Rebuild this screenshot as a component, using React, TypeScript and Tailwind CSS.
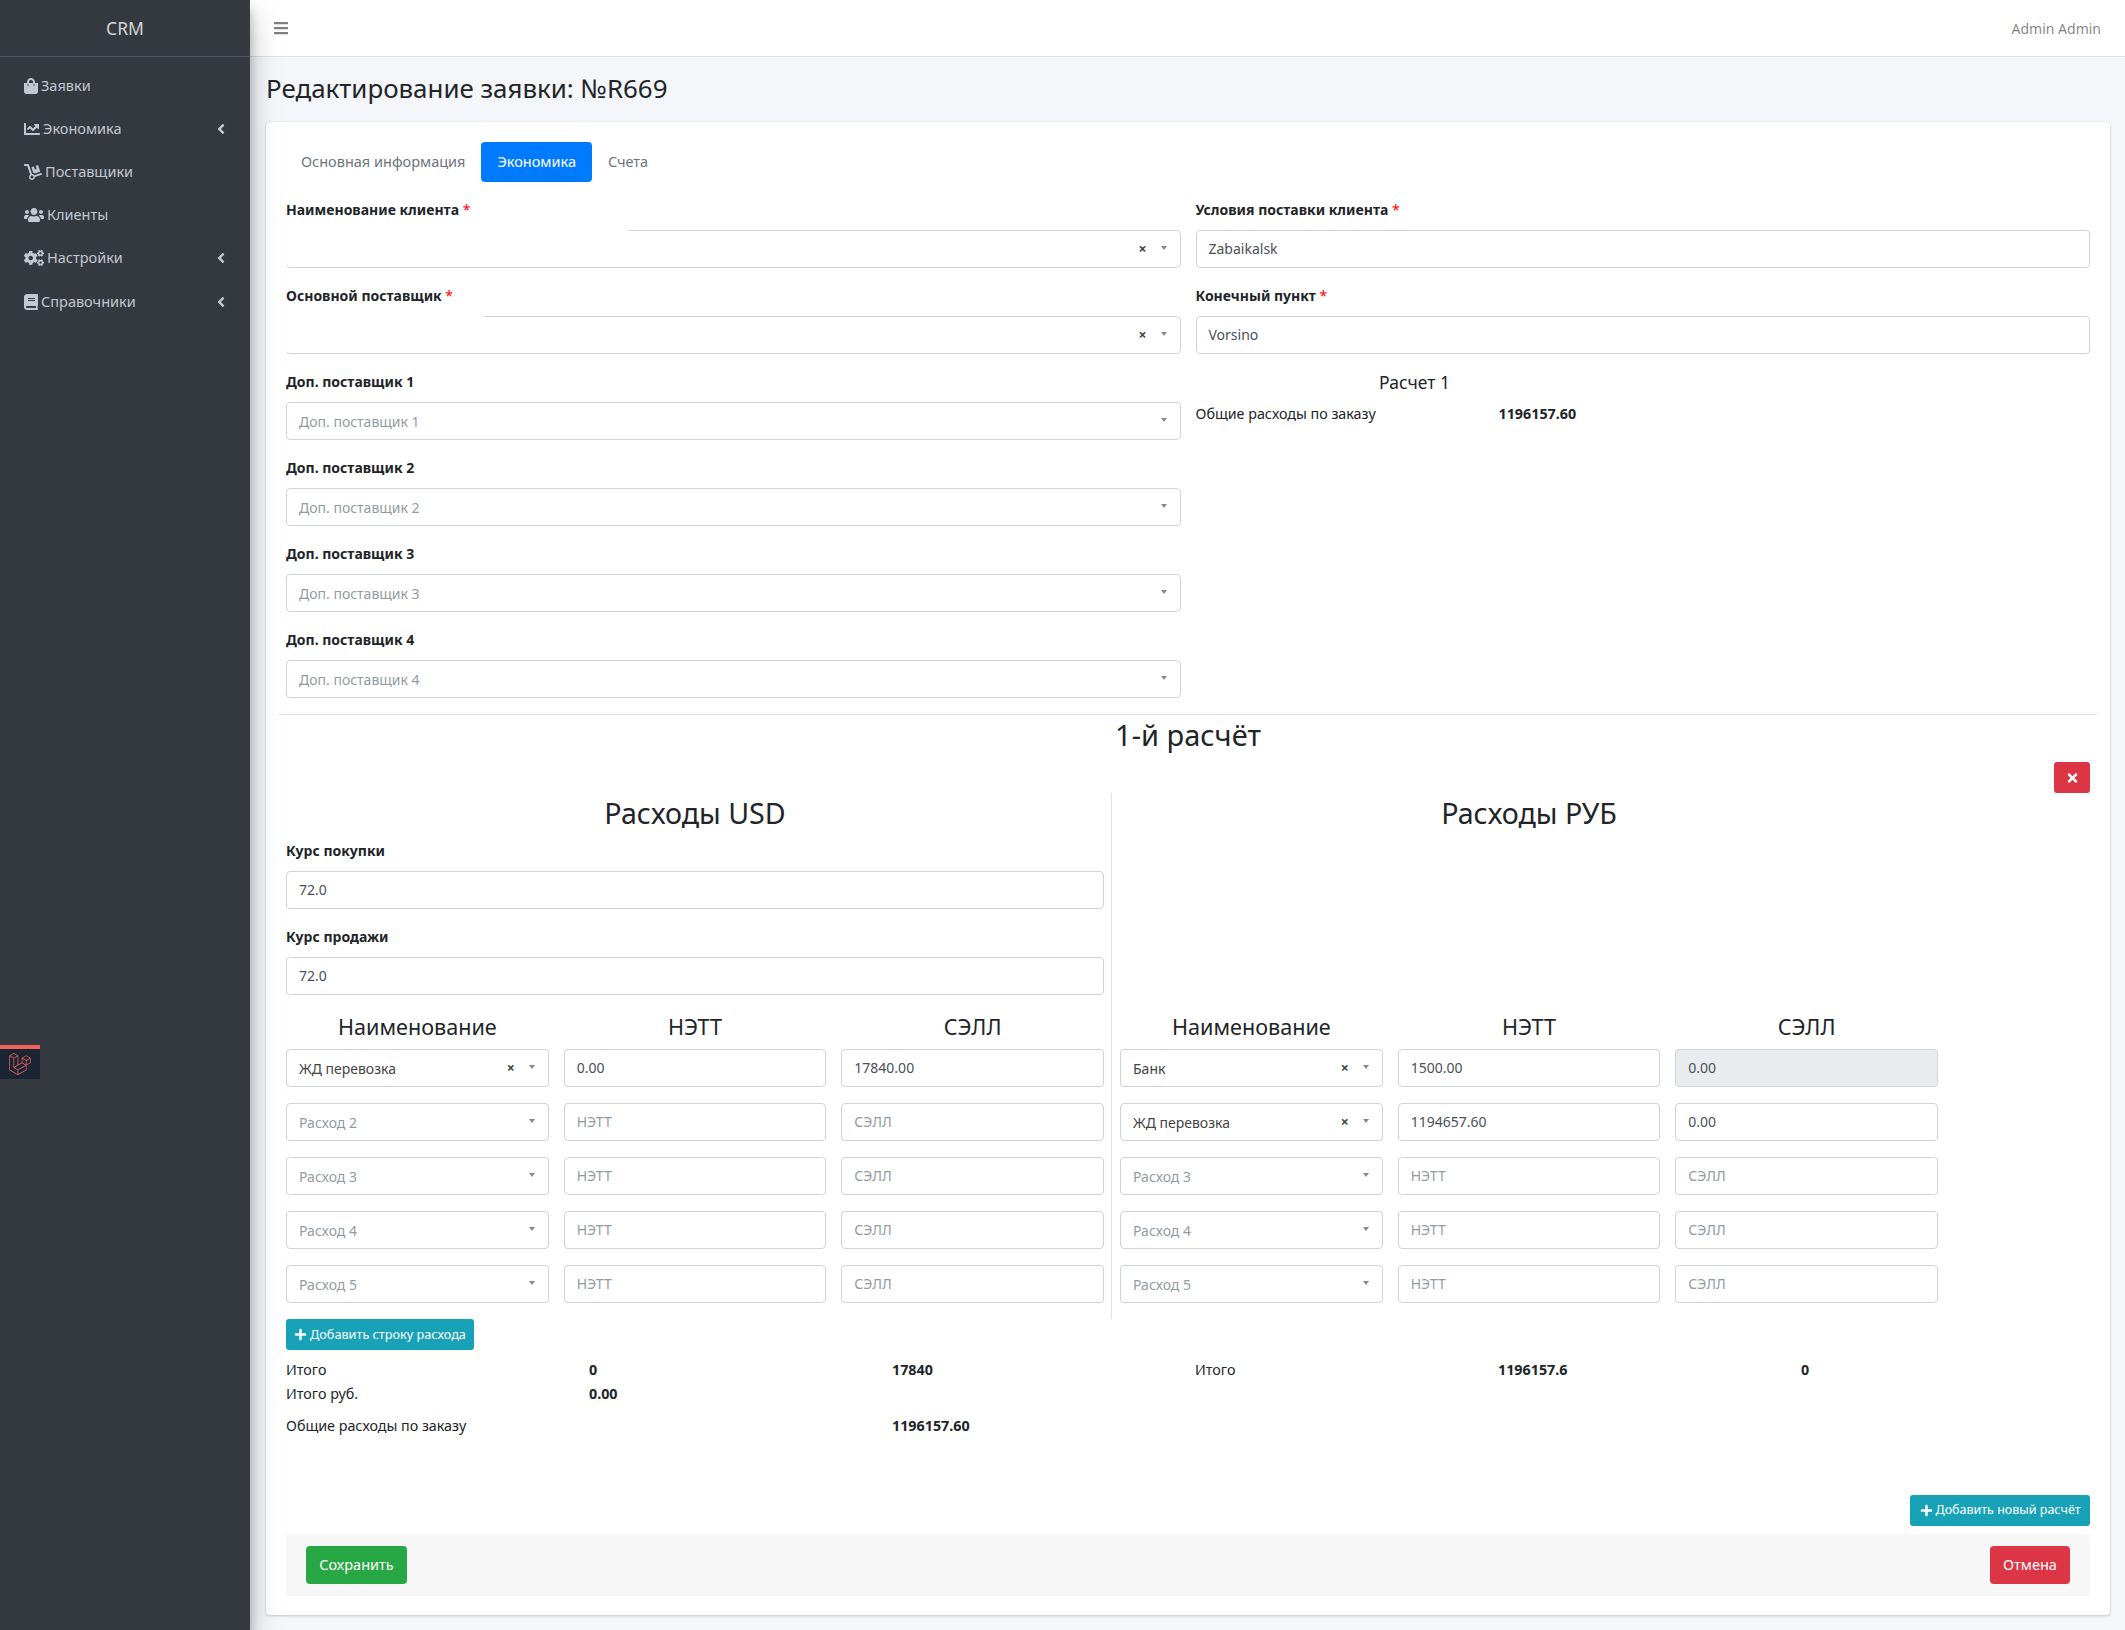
import { ReactNode } from "react";
import { FaAngleLeft, FaBars, FaBook, FaChartLine, FaCogs, FaDolly, FaPlus, FaShoppingBag, FaTimes, FaUsers } from "react-icons/fa";
import { SiLaravel } from "react-icons/si";

const NAV = [
  { label: "Заявки", icon: <FaShoppingBag className="w-[14px] h-[16px]" /> },
  { label: "Экономика", icon: <FaChartLine className="w-[16px] h-[16px]" />, arrow: true },
  { label: "Поставщики", icon: <FaDolly className="w-[18px] h-[16px]" /> },
  { label: "Клиенты", icon: <FaUsers className="w-[20px] h-[16px]" /> },
  { label: "Настройки", icon: <FaCogs className="w-[20px] h-[16px]" />, arrow: true },
  { label: "Справочники", icon: <FaBook className="w-[14px] h-[16px]" />, arrow: true },
];

function Label({ children, req }: { children: ReactNode; req?: boolean }) {
  return (
    <div className="h-[24px] mb-[8px] text-[14px] leading-[24px] font-bold text-[#212529]">
      {children}
      {req && <span className="text-[#ff0000] font-normal"> *</span>}
    </div>
  );
}

function Input({ value, placeholder, disabled }: { value?: string; placeholder?: string; disabled?: boolean }) {
  return (
    <div
      className={`h-[38px] px-[12px] pb-[1px] flex items-center border border-[#ced4da] rounded-[4px] text-[14px] ${
        disabled ? "bg-[#e9ecef] text-[#495057]" : "bg-white text-[#495057]"
      }`}
    >
      {value ?? <span className="text-[#939ba2]">{placeholder}</span>}
    </div>
  );
}

function Select({ value, placeholder, cover }: { value?: string; placeholder?: string; cover?: string }) {
  return (
    <div className="relative h-[38px] pl-[12px] pr-[13px] flex items-center border border-[#ced4da] rounded-[4px] bg-white text-[14px] text-[#444]">
      {cover === "client" && <div className="absolute -left-px -top-px w-[342px] h-[36px] bg-white" />}
      {cover === "supplier" && <div className="absolute -left-px -top-px w-[198px] h-[36px] bg-white" />}
      <span className={`flex-1 pt-[1px] ${value ? "" : "text-[#939ba2]"}`}>{value ?? placeholder}</span>
      {(value !== undefined || cover) && <span className="relative mr-[14px] text-[14px] font-bold text-[#444] leading-none">×</span>}
      <span className="relative w-0 h-0 border-x-[3px] border-x-transparent border-t-[4px] border-t-[#888] -translate-y-[1px]" />
    </div>
  );
}

function CostRows({ rows }: { rows: { select?: string; net?: string; sell?: string; off?: boolean; n: number }[] }) {
  return (
    <div className="flex flex-col gap-[16px]">
      {rows.map((r) => (
        <div key={r.n} className="grid grid-cols-3 gap-[15px]">
          <Select value={r.select} placeholder={`Расход ${r.n}`} />
          <Input value={r.net} placeholder="НЭТТ" />
          <Input value={r.sell} placeholder="СЭЛЛ" disabled={r.off} />
        </div>
      ))}
    </div>
  );
}

function CostHead() {
  return (
    <div className="grid grid-cols-3 gap-[15px] h-[38px] mb-[3px] text-[21.6px] leading-[38px] text-center text-[#212529]">
      <div>Наименование</div>
      <div>НЭТТ</div>
      <div>СЭЛЛ</div>
    </div>
  );
}

export default function App() {
  return (
    <div
      className="relative flex min-h-[1630px] bg-[#f4f6f9] text-[#212529]"
      style={{ fontFamily: '"Noto Sans", sans-serif' }}
    >
      <aside className="w-[250px] shrink-0 bg-[#343a40] shadow-[0_14px_28px_rgba(0,0,0,0.25),0_10px_10px_rgba(0,0,0,0.22)] z-10">
        <div className="h-[57px] border-b border-[#4b545c] flex items-center justify-center text-[17.5px] text-[#ffffffcc]">CRM</div>
        <nav className="pt-[7px] px-[8px]">
          {NAV.map((n) => (
            <div key={n.label} className="h-[43.2px] flex items-center pl-[16px] pr-[16px] text-[#c2c7d0] text-[14.5px]">
              <span className="mr-[3px]">{n.icon}</span>
              <span className="flex-1">{n.label}</span>
              {n.arrow && <FaAngleLeft className="w-[10px] h-[16px]" />}
            </div>
          ))}
        </nav>
      </aside>

      <div className="flex-1 min-w-0">
        <header className="h-[57px] bg-white border-b border-[#dee2e6] flex items-center justify-between pl-[24px] pr-[24px]">
          <FaBars className="w-[14px] h-[16px] text-[#00000080]" />
          <span className="text-[14px] text-[#00000080]">Admin Admin</span>
        </header>

        <div className="pl-[16px] pr-[15px]">
          <h1 className="h-[65px] flex items-center text-[25.9px] text-[#212529] pb-[2px]">Редактирование заявки: №R669</h1>

          <div className="bg-white rounded-[4px] shadow-[0_0_1px_rgba(0,0,0,0.125),0_1px_3px_rgba(0,0,0,0.2)] px-[20px] pt-[20px] pb-[19px]">
            <div className="flex h-[40px] text-[14.5px] mb-[16px]">
              <span className="pl-[15px] pr-[16px] leading-[38px] text-[#6c757d]">Основная информация</span>
              <span className="px-[16px] leading-[38px] bg-[#007bff] text-white rounded-[4px]">Экономика</span>
              <span className="px-[16px] leading-[38px] text-[#6c757d]">Счета</span>
            </div>

            <div className="grid grid-cols-2 gap-x-[15px] gap-y-[16px]">
              <div className="flex flex-col gap-[16px]">
                <div>
                  <Label req>Наименование клиента</Label>
                  <Select cover="client" />
                </div>
                <div>
                  <Label req>Основной поставщик</Label>
                  <Select cover="supplier" />
                </div>
                {[1, 2, 3, 4].map((n) => (
                  <div key={n}>
                    <Label>Доп. поставщик {n}</Label>
                    <Select placeholder={`Доп. поставщик ${n}`} />
                  </div>
                ))}
              </div>
              <div className="flex flex-col gap-[16px]">
                <div>
                  <Label req>Условия поставки клиента</Label>
                  <Input value="Zabaikalsk" />
                </div>
                <div>
                  <Label req>Конечный пункт</Label>
                  <Input value="Vorsino" />
                </div>
                <div>
                  <div className="w-[438px] h-[24px] text-center text-[17.5px] leading-[24px]">Расчет 1</div>
                  <div className="grid grid-cols-[303px_1fr] mt-[8px] text-[14.3px] leading-[24px]">
                    <span>Общие расходы по заказу</span>
                    <b>1196157.60</b>
                  </div>
                </div>
              </div>
            </div>

            <div className="-mx-[7px] mt-[16px] border-t border-[#dee2e6]" />
            <h3 className="h-[40px] text-center text-[29px] leading-[40px]">1-й расчёт</h3>

            <div className="flex justify-end mt-[7px] h-[31px]">
              <span className="w-[36px] h-[31px] flex items-center justify-center bg-[#dc3545] text-white rounded-[3px]">
                <FaTimes className="w-[11px] h-[14px]" />
              </span>
            </div>

            <div className="grid grid-cols-[818px_818px] gap-[16px] h-[526px]">
              <div className="relative">
                <div className="absolute -right-[8px] top-0 bottom-0 border-r border-[#dee2e6]" />
                <div className="h-[40px] text-center text-[28.6px] leading-[40px]">Расходы USD</div>
                <div className="h-[6px]" />
                <Label>Курс покупки</Label>
                <Input value="72.0" />
                <div className="h-[16px]" />
                <Label>Курс продажи</Label>
                <Input value="72.0" />
                <div className="h-[13px]" />
                <CostHead />
                <CostRows
                  rows={[
                    { n: 1, select: "ЖД перевозка", net: "0.00", sell: "17840.00" },
                    { n: 2 },
                    { n: 3 },
                    { n: 4 },
                    { n: 5 },
                  ]}
                />
              </div>
              <div>
                <div className="h-[40px] text-center text-[28.6px] leading-[40px]">Расходы РУБ</div>
                <div className="h-[175px]" />
                <CostHead />
                <CostRows
                  rows={[
                    { n: 1, select: "Банк", net: "1500.00", sell: "0.00", off: true },
                    { n: 2, select: "ЖД перевозка", net: "1194657.60", sell: "0.00" },
                    { n: 3 },
                    { n: 4 },
                    { n: 5 },
                  ]}
                />
              </div>
            </div>

            <div className="h-[31px] w-[188px] flex items-center justify-center gap-[3px] bg-[#17a2b8] rounded-[3px] text-white text-[12.7px]">
              <FaPlus className="w-[13px] h-[13px]" />
              Добавить строку расхода
            </div>

            <div className="grid grid-cols-[repeat(6,303px)] mt-[8px] text-[14.3px] leading-[24px]">
              <span>Итого</span>
              <b>0</b>
              <b>17840</b>
              <span>Итого</span>
              <b>1196157.6</b>
              <b>0</b>
              <span>Итого руб.</span>
              <b className="col-span-5">0.00</b>
              <span className="mt-[8px]">Общие расходы по заказу</span>
              <span />
              <b className="mt-[8px]">1196157.60</b>
            </div>

            <div className="flex justify-end mt-[57px]">
              <span className="h-[31px] w-[180px] flex items-center justify-center gap-[3px] bg-[#17a2b8] rounded-[3px] text-white text-[12.5px]">
                <FaPlus className="w-[13px] h-[13px]" />
                Добавить новый расчёт
              </span>
            </div>

            <div className="mt-[8px] h-[62px] px-[20px] bg-[#f7f7f7] flex items-center justify-between text-[14.5px] text-white">
              <span className="h-[38px] w-[101px] flex items-center justify-center bg-[#28a745] rounded-[4px]">Сохранить</span>
              <span className="h-[38px] w-[80px] flex items-center justify-center bg-[#dc3545] rounded-[4px]">Отмена</span>
            </div>
          </div>
        </div>
      </div>

      <div className="absolute left-0 top-[1045px] w-[40px] h-[34px] z-20 border-t-[4px] border-[#f4645f] bg-[#1b2433] flex items-center justify-center">
        <SiLaravel className="w-[22px] h-[22px] text-[#f4645f]" />
      </div>
    </div>
  );
}
